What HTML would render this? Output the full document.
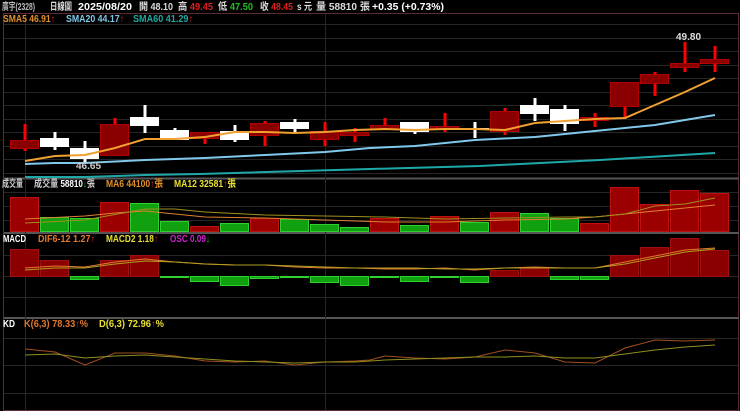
<!DOCTYPE html>
<html><head><meta charset="utf-8"><style>
html,body{margin:0;padding:0;background:#000;width:740px;height:411px;overflow:hidden}
svg{display:block}
text{font-family:"Liberation Sans","Noto Sans CJK TC",sans-serif;font-weight:bold;font-size:10px}
</style></head><body>
<svg width="740" height="411" viewBox="0 0 740 411" xmlns="http://www.w3.org/2000/svg">
<rect width="740" height="411" fill="#000"/>
<!-- header -->
<text x="2" y="10" fill="#bbb" font-size="9" font-weight="normal" textLength="33" lengthAdjust="spacingAndGlyphs">廣宇(2328)</text>
<text x="50" y="10" fill="#ddd" font-size="10" font-weight="normal" textLength="22" lengthAdjust="spacingAndGlyphs">日線圖</text>
<text x="78" y="10" fill="#fff" font-size="10" textLength="54" lengthAdjust="spacingAndGlyphs">2025/08/20</text>
<text x="139" y="10" fill="#ddd" font-size="10" textLength="34" lengthAdjust="spacingAndGlyphs">開 48.10</text>
<text x="178" y="10" fill="#ddd" font-size="10" textLength="35" lengthAdjust="spacingAndGlyphs">高 <tspan fill="#e02020">49.45</tspan></text>
<text x="218" y="10" fill="#ddd" font-size="10" textLength="35" lengthAdjust="spacingAndGlyphs">低 <tspan fill="#20c020">47.50</tspan></text>
<text x="260" y="10" fill="#ddd" font-size="10" textLength="33" lengthAdjust="spacingAndGlyphs">收 <tspan fill="#e02020">48.45</tspan></text>
<text x="297" y="10" fill="#ddd" font-size="9" textLength="15" lengthAdjust="spacingAndGlyphs">s 元</text>
<text x="316" y="10" fill="#ddd" font-size="10" textLength="54" lengthAdjust="spacingAndGlyphs">量 58810 張</text>
<text x="372" y="10" fill="#fff" font-size="10" textLength="72" lengthAdjust="spacingAndGlyphs">+0.35 (+0.73%)</text>
<!-- panel borders -->
<rect x="3.5" y="13.5" width="735" height="397" fill="none" stroke="#5a2a35"/>
<line x1="4" y1="178.5" x2="739" y2="178.5" stroke="#555" stroke-width="2"/>
<line x1="4" y1="233" x2="739" y2="233" stroke="#555" stroke-width="2"/>
<line x1="4" y1="318" x2="739" y2="318" stroke="#555" stroke-width="2"/>
<!-- grid -->
<g stroke="#262626" stroke-width="1">
<line x1="4" y1="24.5" x2="738" y2="24.5"/><line x1="4" y1="38.5" x2="738" y2="38.5"/>
<line x1="4" y1="51.5" x2="738" y2="51.5"/><line x1="4" y1="65.5" x2="738" y2="65.5"/>
<line x1="4" y1="78.5" x2="738" y2="78.5"/><line x1="4" y1="92.5" x2="738" y2="92.5"/>
<line x1="4" y1="105.5" x2="738" y2="105.5"/><line x1="4" y1="119.5" x2="738" y2="119.5"/>
<line x1="4" y1="132.5" x2="738" y2="132.5"/><line x1="4" y1="146.5" x2="738" y2="146.5"/>
<line x1="4" y1="159.5" x2="738" y2="159.5"/><line x1="4" y1="173.5" x2="738" y2="173.5"/>
<line x1="4" y1="192.5" x2="738" y2="192.5"/><line x1="4" y1="206.5" x2="738" y2="206.5"/>
<line x1="4" y1="220.5" x2="738" y2="220.5"/>
<line x1="4" y1="255.5" x2="738" y2="255.5"/><line x1="4" y1="276.5" x2="738" y2="276.5"/>
<line x1="4" y1="297.5" x2="738" y2="297.5"/>
<line x1="4" y1="338.5" x2="738" y2="338.5"/><line x1="4" y1="365.5" x2="738" y2="365.5"/>
<line x1="4" y1="393.5" x2="738" y2="393.5"/>
<line x1="25.5" y1="14" x2="25.5" y2="410"/><line x1="325.5" y1="14" x2="325.5" y2="410"/>
</g>
<!-- main labels -->
<text x="3" y="22" fill="#e0902a" font-size="9" textLength="52" lengthAdjust="spacingAndGlyphs">SMA5 46.91<tspan fill="#e02020">↑</tspan></text>
<text x="66" y="22" fill="#7ec8e8" font-size="9" textLength="58" lengthAdjust="spacingAndGlyphs">SMA20 44.17<tspan fill="#e02020">↑</tspan></text>
<text x="133" y="22" fill="#20a8a0" font-size="9" textLength="60" lengthAdjust="spacingAndGlyphs">SMA60 41.29<tspan fill="#e02020">↑</tspan></text>
<!-- MA lines -->
<polyline fill="none" stroke="#20a8a8" stroke-width="2" points="25,177 85,177 145,175 200,174 370,169 480,166 600,160 715,153"/>
<polyline fill="none" stroke="#80c8ec" stroke-width="2" points="25,164 55,163 85,163 145,160 205,158 265,155 325,152 370,148 415,146 475,140 535,137 595,131 655,125 715,115"/>
<!-- candles -->
<g stroke-width="3" stroke="#ff0000">
<line x1="25" y1="124" x2="25" y2="151"/><line x1="115" y1="118" x2="115" y2="155"/>
<line x1="205" y1="132" x2="205" y2="144"/><line x1="265" y1="121" x2="265" y2="146"/>
<line x1="325" y1="122" x2="325" y2="146"/><line x1="355" y1="128" x2="355" y2="142"/>
<line x1="385" y1="118" x2="385" y2="130"/><line x1="445" y1="113" x2="445" y2="132"/>
<line x1="505" y1="108" x2="505" y2="135"/><line x1="595" y1="113" x2="595" y2="127"/>
<line x1="625" y1="82" x2="625" y2="119"/><line x1="655" y1="72" x2="655" y2="96"/>
<line x1="685" y1="42" x2="685" y2="72"/><line x1="715" y1="46" x2="715" y2="72"/>
</g>
<g stroke-width="3" stroke="#fff">
<line x1="55" y1="132" x2="55" y2="150"/><line x1="85" y1="141" x2="85" y2="162"/>
<line x1="145" y1="105" x2="145" y2="133"/><line x1="175" y1="128" x2="175" y2="140"/>
<line x1="235" y1="125" x2="235" y2="142"/><line x1="295" y1="119" x2="295" y2="132"/>
<line x1="415" y1="122" x2="415" y2="134"/><line x1="475" y1="122" x2="475" y2="138"/>
<line x1="535" y1="98" x2="535" y2="121"/><line x1="565" y1="105" x2="565" y2="131"/>
</g>
<g fill="#8a0000" stroke="#b00000">
<rect x="10.5" y="140.5" width="28" height="8"/><rect x="100.5" y="124.5" width="28" height="31"/>
<rect x="190.5" y="132.5" width="28" height="6"/><rect x="250.5" y="123.5" width="28" height="12"/>
<rect x="310.5" y="131.5" width="28" height="8"/><rect x="340.5" y="132.5" width="28" height="3"/>
<rect x="370.5" y="125.5" width="28" height="4"/><rect x="430.5" y="126.5" width="28" height="2"/>
<rect x="490.5" y="111.5" width="28" height="20"/><rect x="580.5" y="117.5" width="28" height="3"/>
<rect x="610.5" y="82.5" width="28" height="24"/><rect x="640.5" y="74.5" width="28" height="9"/>
<rect x="670.5" y="63.5" width="28" height="4"/><rect x="700.5" y="59.5" width="28" height="4"/>
</g>
<g fill="#fff">
<rect x="40" y="138" width="29" height="9"/><rect x="70" y="148" width="29" height="11"/>
<rect x="130" y="117" width="29" height="9"/><rect x="160" y="130" width="29" height="10"/>
<rect x="220" y="131" width="29" height="9"/><rect x="280" y="122" width="29" height="7"/>
<rect x="400" y="122" width="29" height="10"/><rect x="460" y="128" width="29" height="2"/>
<rect x="520" y="105" width="29" height="9"/><rect x="550" y="109" width="29" height="15"/>
</g>
<polyline fill="none" stroke="#f0a030" stroke-width="2" points="25,161 55,156 85,155 115,148 145,139 175,139 205,137 235,132 265,132 295,133 325,132 355,130 385,129 415,130 445,129 475,129 505,130 535,123 565,121 595,119 625,118 655,105 685,92 715,78"/>
<text x="76" y="169" fill="#ccc" font-size="9" font-weight="normal">46.65</text>
<text x="676" y="40" fill="#ddd" font-size="9">49.80</text>
<!-- volume -->
<text x="2" y="187" fill="#ccc" font-size="9" font-weight="normal" textLength="21" lengthAdjust="spacingAndGlyphs">成交量</text>
<text x="34" y="187" fill="#ccc" font-size="9" font-weight="normal" textLength="61" lengthAdjust="spacingAndGlyphs">成交量 <tspan fill="#fff" font-weight="bold">58810</tspan><tspan fill="#20c020">↓</tspan>張</text>
<text x="106" y="187" fill="#e0902a" font-size="9" textLength="57" lengthAdjust="spacingAndGlyphs">MA6 44100<tspan fill="#e02020">↑</tspan>張</text>
<text x="174" y="187" fill="#e8e030" font-size="9" textLength="62" lengthAdjust="spacingAndGlyphs">MA12 32581<tspan fill="#e02020">↑</tspan>張</text>
<g stroke-width="1">
<g fill="#9a0000" stroke="#c01010">
<rect x="10.5" y="197.5" width="28" height="34"/><rect x="100.5" y="202.5" width="28" height="29"/>
<rect x="190.5" y="226.5" width="28" height="5"/><rect x="250.5" y="218.5" width="28" height="13"/>
<rect x="370.5" y="218.5" width="28" height="13"/><rect x="430.5" y="216.5" width="28" height="15"/>
<rect x="490.5" y="212.5" width="28" height="19"/><rect x="580.5" y="223.5" width="28" height="8"/>
<rect x="610.5" y="187.5" width="28" height="44"/><rect x="640.5" y="204.5" width="28" height="27"/>
<rect x="670.5" y="190.5" width="28" height="41"/><rect x="700.5" y="193.5" width="28" height="38"/>
</g>
<g fill="#10a010" stroke="#30d030">
<rect x="40.5" y="217.5" width="28" height="14"/><rect x="70.5" y="218.5" width="28" height="13"/>
<rect x="130.5" y="203.5" width="28" height="28"/><rect x="160.5" y="221.5" width="28" height="10"/>
<rect x="220.5" y="223.5" width="28" height="8"/><rect x="280.5" y="219.5" width="28" height="12"/>
<rect x="310.5" y="224.5" width="28" height="7"/><rect x="340.5" y="227.5" width="28" height="4"/>
<rect x="400.5" y="225.5" width="28" height="6"/><rect x="460.5" y="222.5" width="28" height="9"/>
<rect x="520.5" y="213.5" width="28" height="18"/><rect x="550.5" y="218.5" width="28" height="13"/>
</g></g>
<polyline fill="none" stroke="#e08030" stroke-width="1" points="25,219 85,216 115,213 145,211 175,214 205,217 265,218 325,220 385,222 445,222 505,220 565,219 595,217 625,214 655,211 685,208 715,205"/>
<polyline fill="none" stroke="#a09020" stroke-width="1" points="25,223 85,220 145,209 175,209 205,212 265,215 325,216 385,217 445,219 505,218 565,217 595,217 625,214 655,206 685,204 715,198"/>
<!-- MACD -->
<text x="3" y="242" fill="#fff" font-size="9" textLength="23" lengthAdjust="spacingAndGlyphs">MACD</text>
<text x="38" y="242" fill="#e07830" font-size="9" font-weight="normal" textLength="57" lengthAdjust="spacingAndGlyphs">DIF6-12 1.27<tspan fill="#e02020">↑</tspan></text>
<text x="106" y="242" fill="#e8e030" font-size="9" font-weight="normal" textLength="52" lengthAdjust="spacingAndGlyphs">MACD2 1.18<tspan fill="#e02020">↑</tspan></text>
<text x="170" y="242" fill="#d020d0" font-size="9" font-weight="normal" textLength="40" lengthAdjust="spacingAndGlyphs">OSC 0.09<tspan fill="#20c020">↓</tspan></text>
<g fill="#8a0000" stroke="#a01010">
<rect x="10.5" y="249.5" width="28" height="27"/><rect x="40.5" y="260.5" width="28" height="16"/>
<rect x="100.5" y="260.5" width="28" height="16"/><rect x="130.5" y="255.5" width="28" height="21"/>
<rect x="490.5" y="270.5" width="28" height="6"/><rect x="520.5" y="267.5" width="28" height="9"/>
<rect x="610.5" y="255.5" width="28" height="21"/><rect x="640.5" y="247.5" width="28" height="29"/>
<rect x="670.5" y="238.5" width="28" height="38"/><rect x="700.5" y="250.5" width="28" height="26"/>
</g>
<g fill="#10a010" stroke="#30d030">
<rect x="70.5" y="276.5" width="28" height="3"/><rect x="160.5" y="276.5" width="28" height="1"/>
<rect x="190.5" y="276.5" width="28" height="5"/><rect x="220.5" y="276.5" width="28" height="9"/>
<rect x="250.5" y="276.5" width="28" height="2"/><rect x="280.5" y="276.5" width="28" height="1"/>
<rect x="310.5" y="276.5" width="28" height="6"/><rect x="340.5" y="276.5" width="28" height="9"/>
<rect x="370.5" y="276.5" width="28" height="1"/><rect x="400.5" y="276.5" width="28" height="5"/>
<rect x="430.5" y="276.5" width="28" height="1"/><rect x="460.5" y="276.5" width="28" height="6"/>
<rect x="550.5" y="276.5" width="28" height="3"/><rect x="580.5" y="276.5" width="28" height="3"/>
</g>
<polyline fill="none" stroke="#e07830" stroke-width="1" points="25,268 55,266 85,267 115,262 145,259 175,262 205,264 235,265 265,265 295,267 325,268 355,268 385,269 415,269 445,268 475,270 505,268 535,267 565,268 595,268 625,262 655,256 685,250 715,248"/>
<polyline fill="none" stroke="#b0a020" stroke-width="1" points="25,270 55,268 85,268 115,264 145,261 175,262 205,264 235,265 265,265 295,266 325,267 355,268 385,268 415,268 445,269 475,269 505,268 535,268 565,268 595,268 625,264 655,258 685,252 715,249"/>
<!-- KD -->
<text x="3" y="327" fill="#fff" font-size="9" textLength="12" lengthAdjust="spacingAndGlyphs">KD</text>
<text x="24" y="327" fill="#e07830" font-size="9" font-weight="normal" textLength="64" lengthAdjust="spacingAndGlyphs">K(6,3) 78.33<tspan fill="#e02020">↑</tspan>%</text>
<text x="99" y="327" fill="#e8e030" font-size="9" font-weight="normal" textLength="65" lengthAdjust="spacingAndGlyphs">D(6,3) 72.96<tspan fill="#e02020">↑</tspan>%</text>
<polyline fill="none" stroke="#a05020" stroke-width="1" points="25,349 55,352 85,365 115,353 145,353 175,356 205,361 235,362 265,361 295,365 325,362 355,361 370,360 385,356 415,358 445,359 475,357 505,350 535,353 565,362 595,363 625,348 655,340 685,341 715,340"/>
<polyline fill="none" stroke="#909020" stroke-width="1" points="25,355 55,354 85,358 115,356 145,355 175,357 205,359 235,361 265,362 295,363 325,362 355,362 385,360 415,359 445,358 475,357 505,357 535,356 565,358 595,358 625,354 655,350 685,347 715,345"/>
</svg>
</body></html>
